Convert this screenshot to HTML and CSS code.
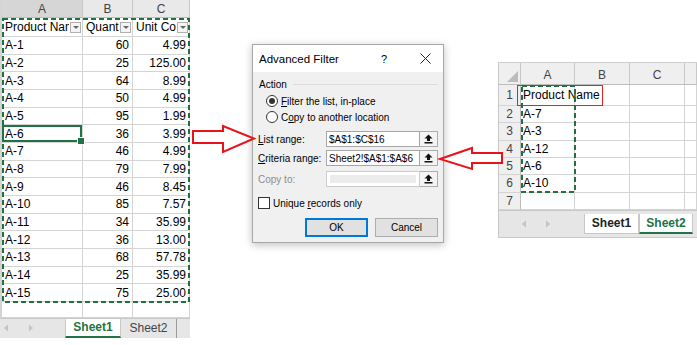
FILE: index.html
```html
<!DOCTYPE html>
<html lang="en">
<head>
    <meta charset="UTF-8">
    <meta name="viewport" content="width=device-width, initial-scale=1.0">
    <title>Advanced Filter</title>
    <link rel="stylesheet" href="styles.css">
</head>
<body>
<div class="canvas">

    <!-- Sheet1: the data list -->
    <div class="sheet-main">
        <div class="row colheads">
            <span class="gut"></span>
            <span class="colhead sel">A</span>
            <span class="colhead">B</span>
            <span class="colhead">C</span>
        </div>
        <div class="row head-row">
            <span class="gut"></span>
            <span class="cell"><span class="clip">Product Name</span><i class="dd"></i></span>
            <span class="cell"><span class="clip">Quantity</span><i class="dd"></i></span>
            <span class="cell"><span class="clip">Unit Cost</span><i class="dd"></i></span>
        </div>
        <div class="row"><span class="gut"></span><span class="cell">A-1</span><span class="cell num">60</span><span class="cell num">4.99</span></div>
        <div class="row"><span class="gut"></span><span class="cell">A-2</span><span class="cell num">25</span><span class="cell num">125.00</span></div>
        <div class="row"><span class="gut"></span><span class="cell">A-3</span><span class="cell num">64</span><span class="cell num">8.99</span></div>
        <div class="row"><span class="gut"></span><span class="cell">A-4</span><span class="cell num">50</span><span class="cell num">4.99</span></div>
        <div class="row"><span class="gut"></span><span class="cell">A-5</span><span class="cell num">95</span><span class="cell num">1.99</span></div>
        <div class="row"><span class="gut"></span><span class="cell active">A-6</span><span class="cell num">36</span><span class="cell num">3.99</span></div>
        <div class="row"><span class="gut"></span><span class="cell">A-7</span><span class="cell num">46</span><span class="cell num">4.99</span></div>
        <div class="row"><span class="gut"></span><span class="cell">A-8</span><span class="cell num">79</span><span class="cell num">7.99</span></div>
        <div class="row"><span class="gut"></span><span class="cell">A-9</span><span class="cell num">46</span><span class="cell num">8.45</span></div>
        <div class="row"><span class="gut"></span><span class="cell">A-10</span><span class="cell num">85</span><span class="cell num">7.57</span></div>
        <div class="row"><span class="gut"></span><span class="cell">A-11</span><span class="cell num">34</span><span class="cell num">35.99</span></div>
        <div class="row"><span class="gut"></span><span class="cell">A-12</span><span class="cell num">36</span><span class="cell num">13.00</span></div>
        <div class="row"><span class="gut"></span><span class="cell">A-13</span><span class="cell num">68</span><span class="cell num">57.78</span></div>
        <div class="row"><span class="gut"></span><span class="cell">A-14</span><span class="cell num">25</span><span class="cell num">35.99</span></div>
        <div class="row"><span class="gut"></span><span class="cell">A-15</span><span class="cell num">75</span><span class="cell num">25.00</span></div>
        <div class="row empty"><span class="gut"></span><span class="cell"></span><span class="cell"></span><span class="cell"></span></div>

        <div class="tabs">
            <div class="nav">
                <svg width="6" height="8" viewBox="0 0 6 8"><path d="M5 0.5 L1 4 L5 7.5 Z" fill="#c4c4c4"/></svg>
                <svg width="6" height="8" viewBox="0 0 6 8"><path d="M1 0.5 L5 4 L1 7.5 Z" fill="#c4c4c4"/></svg>
            </div>
            <span class="tab active">Sheet1</span>
            <span class="tab">Sheet2</span>
        </div>

        <!-- copy marquee around A1:C16 -->
        <svg class="marquee" width="188" height="285" viewBox="0 0 188 285">
            <rect x="1" y="1" width="186" height="283" fill="none" stroke="#22703f" stroke-width="2" stroke-dasharray="5 3"/>
        </svg>
    </div>

    <!-- Advanced Filter dialog -->
    <div class="dialog">
        <div class="dlg-title">
            <span class="dlg-name">Advanced Filter</span>
            <span class="dlg-help">?</span>
            <svg class="dlg-close" width="11" height="11" viewBox="0 0 11 11">
                <path d="M0.5 0.5 L10.5 10.5 M10.5 0.5 L0.5 10.5" stroke="#222" stroke-width="1"/>
            </svg>
        </div>
        <div class="dlg-body">
            <div class="group-title"><span>Action</span><span class="rule"></span></div>
            <div class="opt"><span class="radio on"></span><span><u>F</u>ilter the list, in-place</span></div>
            <div class="opt"><span class="radio"></span><span>C<u>o</u>py to another location</span></div>

            <div class="field f1">
                <span class="lbl"><u>L</u>ist range:</span>
                <span class="input">$A$1:$C$16</span>
                <span class="ref"><svg width="9" height="10" viewBox="0 0 9 10"><path d="M4.5 0.5 L8.5 4.5 H6 V7 H3 V4.5 H0.5 Z" fill="#111"/><rect x="0.5" y="8" width="8" height="1.5" fill="#111"/></svg></span>
            </div>
            <div class="field f2">
                <span class="lbl"><u>C</u>riteria range:</span>
                <span class="input">Sheet2!$A$1:$A$6</span>
                <span class="ref"><svg width="9" height="10" viewBox="0 0 9 10"><path d="M4.5 0.5 L8.5 4.5 H6 V7 H3 V4.5 H0.5 Z" fill="#111"/><rect x="0.5" y="8" width="8" height="1.5" fill="#111"/></svg></span>
            </div>
            <div class="field f3 disabled">
                <span class="lbl">Copy to:</span>
                <span class="input"></span>
                <span class="ref"><svg width="9" height="10" viewBox="0 0 9 10"><path d="M4.5 0.5 L8.5 4.5 H6 V7 H3 V4.5 H0.5 Z" fill="#111"/><rect x="0.5" y="8" width="8" height="1.5" fill="#111"/></svg></span>
            </div>

            <div class="check"><span class="box"></span><span>Unique <u>r</u>ecords only</span></div>

            <div class="buttons">
                <button class="btn default">OK</button>
                <button class="btn">Cancel</button>
            </div>
        </div>
    </div>

    <!-- Sheet2: the criteria range -->
    <div class="sheet-crit">
        <div class="crow colheads">
            <span class="corner"></span>
            <span class="colhead">A</span>
            <span class="colhead">B</span>
            <span class="colhead">C</span>
            <span class="colhead"></span>
        </div>
        <div class="crow first"><span class="rownum">1</span><span class="cell">Product Name</span><span class="cell"></span><span class="cell"></span><span class="cell"></span></div>
        <div class="crow"><span class="rownum">2</span><span class="cell">A-7</span><span class="cell"></span><span class="cell"></span><span class="cell"></span></div>
        <div class="crow"><span class="rownum">3</span><span class="cell">A-3</span><span class="cell"></span><span class="cell"></span><span class="cell"></span></div>
        <div class="crow"><span class="rownum">4</span><span class="cell">A-12</span><span class="cell"></span><span class="cell"></span><span class="cell"></span></div>
        <div class="crow"><span class="rownum">5</span><span class="cell">A-6</span><span class="cell"></span><span class="cell"></span><span class="cell"></span></div>
        <div class="crow"><span class="rownum">6</span><span class="cell">A-10</span><span class="cell"></span><span class="cell"></span><span class="cell"></span></div>
        <div class="crow"><span class="rownum">7</span><span class="cell"></span><span class="cell"></span><span class="cell"></span><span class="cell"></span></div>

        <div class="tabs tabs-crit">
            <div class="nav">
                <svg width="6" height="8" viewBox="0 0 6 8"><path d="M5 0.5 L1 4 L5 7.5 Z" fill="#c4c4c4"/></svg>
                <svg width="6" height="8" viewBox="0 0 6 8"><path d="M1 0.5 L5 4 L1 7.5 Z" fill="#c4c4c4"/></svg>
            </div>
            <span class="tab bold">Sheet1</span>
            <span class="tab active">Sheet2</span>
        </div>

        <span class="crit-box"></span>
        <svg class="marquee crit-marquee" width="55" height="108" viewBox="0 0 55 108">
            <rect x="1" y="1" width="53" height="106" fill="none" stroke="#22703f" stroke-width="2" stroke-dasharray="5 3"/>
        </svg>
    </div>

    <!-- red callout arrows -->
    <svg class="arrows" width="697" height="345" viewBox="0 0 697 345">
        <polygon points="193,131 223,131 223,126 254,138.5 223,152 223,143 193,143" fill="#fff" stroke="#e8131b" stroke-width="2"/>
        <polygon points="502,153 472,153 472,148 440,159 472,169 472,163 502,163" fill="#fff" stroke="#e8131b" stroke-width="2"/>
    </svg>

</div>
</body>
</html>
```

FILE: styles.css
```css
* {
    box-sizing: border-box;
}
body {
    margin: 0;
    background: #fff;
    font-family: "Liberation Sans", Arial, sans-serif;
    color: #000;
}
.canvas {
    position: relative;
    width: 697px;
    height: 345px;
    overflow: hidden;
}

/* ---------- sheets ---------- */
.sheet-main {
    position: absolute;
    left: 0;
    top: 0;
    width: 190px;
    height: 345px;
}
.row {
    display: grid;
    grid-template-columns: 2px 81px 50px 57px;
    height: 17.67px;
}
.row.colheads {
    height: 18px;
}
.row.head-row {
    height: 19px;
}
.row.head-row .cell {
    padding: 0 1px 0 3px;
}
.row.empty {
    height: 16px;
}
.gut {
    background: #d4d4d4;
}
.colhead {
    background: #e9e9e9;
    border-right: 1px solid #c8c8c8;
    border-bottom: 1px solid #bdbdbd;
    color: #444;
    font-size: 12px;
    display: flex;
    align-items: center;
    justify-content: center;
}
.colhead.sel {
    background: #d6d6d6;
}
.cell {
    position: relative;
    display: flex;
    align-items: center;
    padding: 0 3px;
    font-size: 12px;
    white-space: nowrap;
    overflow: hidden;
    border-right: 1px solid #d4d4d4;
    border-bottom: 1px solid #d4d4d4;
}
.cell.num {
    justify-content: flex-end;
}
.cell.active {
    overflow: visible;
    z-index: 1;
    box-shadow: inset 0 0 0 2px #217346;
}
.cell.active::after {
    content: "";
    position: absolute;
    right: -3px;
    bottom: -3px;
    width: 6px;
    height: 6px;
    background: #217346;
    border: 1px solid #fff;
}
.clip {
    flex: 1;
    min-width: 0;
    overflow: hidden;
}
.dd {
    position: relative;
    flex: none;
    width: 11px;
    height: 11px;
    margin-left: 1px;
    border: 1px solid #b0b0b0;
    background: #f4f4f4;
}
.dd::after {
    content: "";
    position: absolute;
    left: 2px;
    top: 3px;
    border-left: 3px solid transparent;
    border-right: 3px solid transparent;
    border-top: 3px solid #666;
}

.tabs {
    display: flex;
    height: 20px;
    background: #e6e6e6;
    border-top: 1px solid #c8c8c8;
}
.nav {
    width: 65px;
    display: flex;
    align-items: center;
    gap: 19px;
    padding-left: 3px;
}
.tab {
    width: 56px;
    display: flex;
    align-items: center;
    justify-content: center;
    font-size: 12px;
    color: #444;
    border-right: 1px solid #9a9a9a;
}
.tab.active {
    background: #fff;
    color: #217346;
    font-weight: bold;
    border-left: 1px solid #c8c8c8;
    border-right: 1px solid #c8c8c8;
    border-bottom: 2px solid #217346;
}
.tab.bold {
    font-weight: bold;
    color: #222;
    background: #fff;
    border-left: 1px solid #c8c8c8;
    border-right: 1px solid #c8c8c8;
}
.marquee {
    position: absolute;
    left: 2px;
    top: 18px;
}

/* criteria sheet */
.sheet-crit {
    position: absolute;
    left: 498px;
    top: 62px;
    width: 199px;
    height: 176px;
    border-left: 1px solid #c8c8c8;
    border-top: 1px solid #d0d0d0;
    border-bottom: 1px solid #c8c8c8;
}
.crow {
    display: grid;
    grid-template-columns: 22px 54px 55px 55px 12px;
    height: 17.33px;
}
.crow.colheads {
    height: 22px;
}
.crow.colheads .colhead {
    background: #efefef;
    align-items: flex-end;
    padding-bottom: 2px;
}
.crow.first {
    height: 21px;
}
.corner {
    position: relative;
    background: #efefef;
    border-right: 1px solid #c8c8c8;
    border-bottom: 1px solid #bdbdbd;
}
.corner::after {
    content: "";
    position: absolute;
    right: 2px;
    bottom: 2px;
    border-left: 11px solid transparent;
    border-bottom: 11px solid #bcbcbc;
}
.rownum {
    background: #efefef;
    border-right: 1px solid #bdbdbd;
    border-bottom: 1px solid #d4d4d4;
    color: #444;
    font-size: 12px;
    display: flex;
    align-items: center;
    justify-content: center;
}
.sheet-crit .cell {
    padding: 0 2px;
    overflow: visible;
}
.tabs-crit {
    height: 27px;
    padding-top: 3px;
    padding-bottom: 3px;
    border-top: 1px solid #c8c8c8;
}
.tabs-crit .nav {
    width: 85px;
    padding-left: 22px;
    gap: 18px;
}
.tabs-crit .tab {
    width: 55px;
    border-bottom: 1px solid #c8c8c8;
}
.tabs-crit .tab.active {
    width: 54px;
    border-bottom: 2px solid #217346;
}
.crit-box {
    position: absolute;
    left: 18px;
    top: 22px;
    width: 86px;
    height: 21px;
    border: 1px solid #e02424;
}
.crit-marquee {
    left: 22px;
    top: 22px;
}

/* ---------- dialog ---------- */
.dialog {
    position: absolute;
    left: 252px;
    top: 44px;
    width: 192px;
    height: 199px;
    border: 1px solid #a8a8a8;
    background: #f0f0f0;
    box-shadow: 0 2px 8px rgba(0, 0, 0, 0.25);
    font-size: 10px;
    color: #000;
}
.dlg-title {
    display: flex;
    align-items: center;
    height: 27px;
    padding: 0 12px 0 6px;
    background: #fff;
}
.dlg-name {
    flex: 1;
    font-size: 11.5px;
}
.dlg-help {
    font-size: 11px;
    margin-right: 33px;
}
.dlg-body {
    padding: 0 5px;
}
.group-title {
    display: flex;
    align-items: center;
    height: 12px;
    margin-top: 6px;
    padding-left: 1px;
}
.rule {
    flex: 1;
    height: 1px;
    margin-left: 6px;
    background: #dcdcdc;
}
.opt {
    display: flex;
    align-items: center;
    gap: 3px;
    height: 16px;
    padding-left: 8px;
}
.group-title + .opt {
    margin-top: 3px;
}
.radio {
    position: relative;
    width: 12px;
    height: 12px;
    border: 1px solid #333;
    border-radius: 50%;
    background: #fff;
}
.radio.on::after {
    content: "";
    position: absolute;
    left: 2px;
    top: 2px;
    width: 6px;
    height: 6px;
    border-radius: 50%;
    background: #333;
}
.field {
    display: flex;
    align-items: center;
    height: 16px;
}
.f1 {
    margin-top: 6px;
}
.f2 {
    margin-top: 3px;
}
.f3 {
    margin-top: 5px;
}
.lbl {
    width: 68px;
    white-space: nowrap;
}
.input {
    width: 94px;
    height: 16px;
    border: 1px solid #a6a6a6;
    background: #fff;
    padding-left: 2px;
    display: flex;
    align-items: center;
    white-space: nowrap;
    overflow: hidden;
}
.disabled .lbl {
    color: #8c8c8c;
}
.disabled .input {
    border-color: #cccccc;
    background: #ececec;
    box-shadow: inset 0 0 0 3px #fff;
}
.ref {
    width: 18px;
    height: 16px;
    border: 1px solid #adadad;
    border-left: none;
    background: #f4f4f4;
    display: flex;
    align-items: center;
    justify-content: center;
}
.check {
    display: flex;
    align-items: center;
    gap: 3px;
    height: 14px;
    margin-top: 9px;
}
.box {
    width: 12px;
    height: 12px;
    border: 1px solid #333;
    background: #fff;
}
.buttons {
    display: flex;
    justify-content: flex-end;
    gap: 7px;
    margin-top: 8px;
}
.btn {
    width: 63px;
    height: 19px;
    padding: 0;
    border: 1px solid #adadad;
    background: #e1e1e1;
    font-family: inherit;
    font-size: 10px;
    color: #000;
}
.btn.default {
    border: 2px solid #0078d7;
}

/* ---------- callouts ---------- */
.arrows {
    position: absolute;
    left: 0;
    top: 0;
    pointer-events: none;
}
```
